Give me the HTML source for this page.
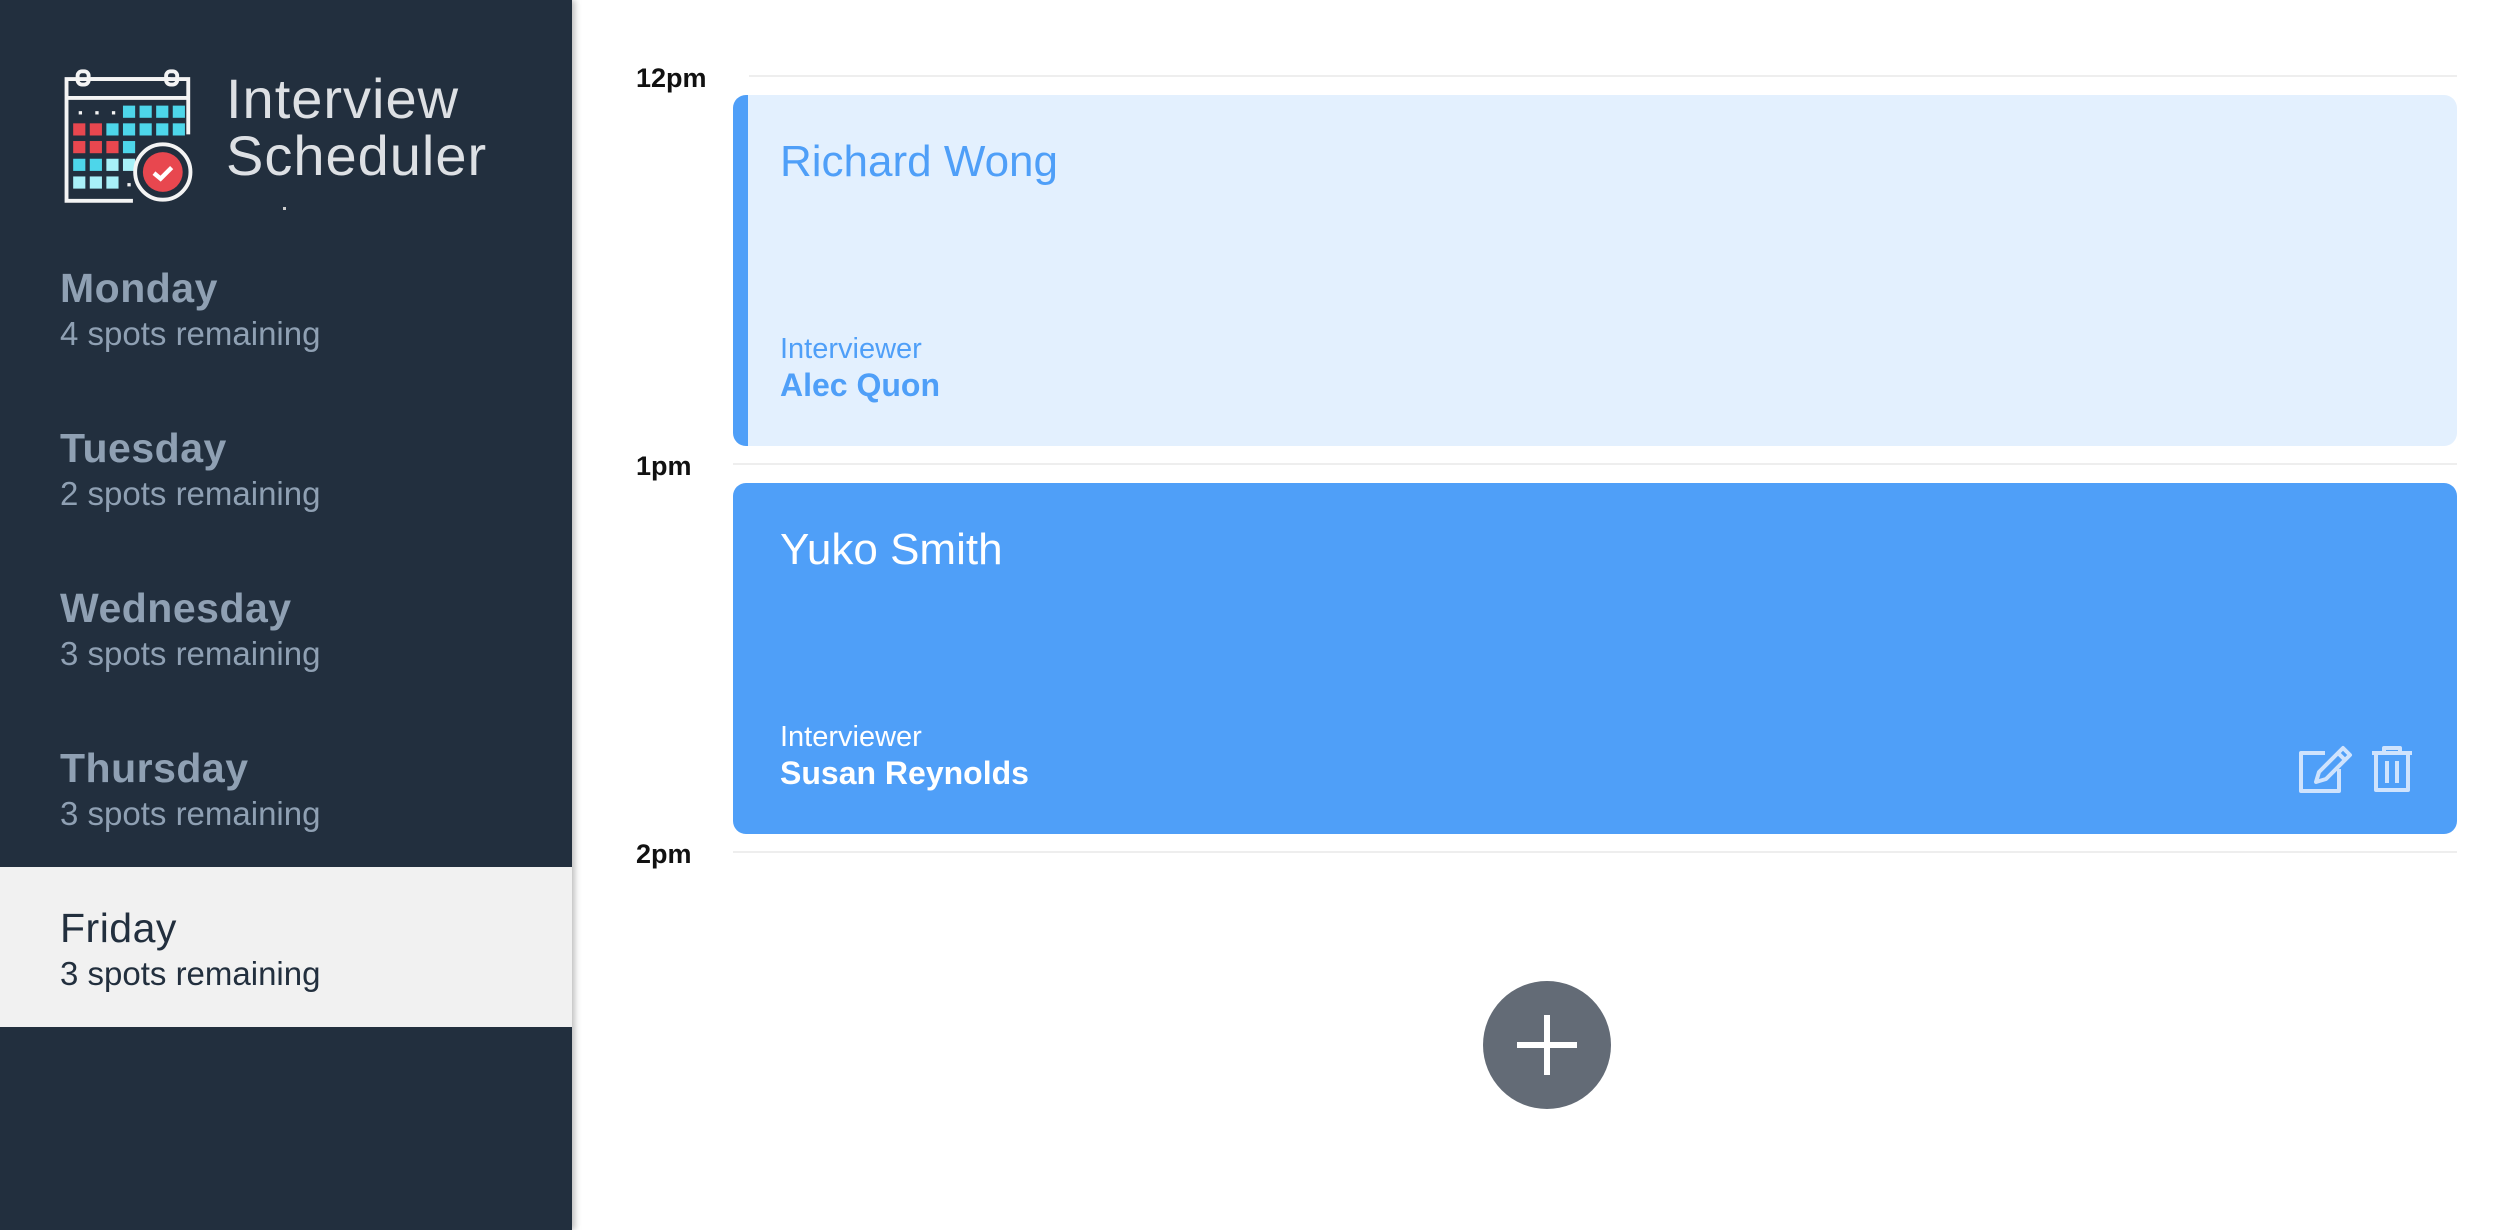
<!DOCTYPE html>
<html><head><meta charset="utf-8"><style>
*{margin:0;padding:0;box-sizing:border-box}
body{width:2513px;height:1230px;overflow:hidden;background:#fff;font-family:"Liberation Sans",sans-serif;position:relative}
.side{position:absolute;left:0;top:0;width:572px;height:1230px;background:#222f3e;box-shadow:3px 0 6px rgba(0,0,0,.25)}
.t{position:absolute;color:#dde0e4;font-size:56px;font-weight:300;left:226px;letter-spacing:1px}
.day{position:absolute;left:0;width:572px;height:160px}
.day .n{position:absolute;left:60px;top:38px;font-size:41px;color:#8fa0b3;font-weight:bold;letter-spacing:.5px}
.day .s{position:absolute;left:60px;top:88px;font-size:33px;color:#8fa0b3}
.day.sel{background:#f1f1f1}
.day.sel .n,.day.sel .s{color:#222f3e}
.day.sel .n{font-weight:normal}
.tm{position:absolute;left:636px;font-size:27px;font-weight:bold;color:#111}
.ln{position:absolute;left:733px;width:1724px;height:2px;background:#eeeeee}
.card{position:absolute;left:733px;width:1724px;border-radius:13px}
.c1{top:95px;height:351px;background:#e3f0fe;border-left:15px solid #4f9ff8;color:#4f9ff8}
.c2{top:483px;height:351px;background:#4f9ff8;color:#fff}
.nm{position:absolute;left:47px;top:42px;font-size:44px}
.c1 .nm,.c1 .iv,.c1 .in{left:32px}
.iv{position:absolute;left:47px;top:238px;font-size:29px}
.in{position:absolute;left:47px;top:272px;font-size:32px;font-weight:bold}
.plus{position:absolute;left:1483px;top:981px;width:128px;height:128px;border-radius:50%;background:#636b76}
</style></head><body>
<div class="side">
<svg style="position:absolute;left:64px;top:68px" width="129" height="135" viewBox="0 0 116 122">
<g fill="none" stroke="#f4f4f4" stroke-width="3.5">
<path d="M62 120H2V10H112V60"/><path d="M24 10H96"/>
<rect x="12" y="3" width="10" height="12" rx="4"/><rect x="92" y="3" width="10" height="12" rx="4"/>
<path d="M2 27H112"/>
</g>
<g fill="#f4f4f4"><rect x="13" y="39" width="3" height="3"/><rect x="28" y="39" width="3" height="3"/><rect x="43" y="39" width="3" height="3"/><rect x="57" y="104" width="3" height="3"/></g>
<g fill="#4dd6ea">
<rect x="53" y="34" width="11" height="11"/><rect x="68" y="34" width="11" height="11"/><rect x="83" y="34" width="11" height="11"/><rect x="98" y="34" width="11" height="11"/>
<rect x="38" y="50" width="11" height="11"/><rect x="53" y="50" width="11" height="11"/><rect x="68" y="50" width="11" height="11"/><rect x="83" y="50" width="11" height="11"/><rect x="98" y="50" width="11" height="11"/>
<rect x="53" y="66" width="11" height="11"/><rect x="8" y="82" width="11" height="11"/><rect x="23" y="82" width="11" height="11"/></g>
<g fill="#a8f0f8"><rect x="38" y="82" width="11" height="11"/><rect x="53" y="82" width="11" height="11"/><rect x="8" y="98" width="11" height="11"/><rect x="23" y="98" width="11" height="11"/><rect x="38" y="98" width="11" height="11"/></g>
<g fill="#e8474f"><rect x="8" y="50" width="11" height="11"/><rect x="23" y="50" width="11" height="11"/><rect x="8" y="66" width="11" height="11"/><rect x="23" y="66" width="11" height="11"/><rect x="38" y="66" width="11" height="11"/></g>
<circle cx="89" cy="94" r="25" fill="#222f3e" stroke="#f4f4f4" stroke-width="3.5"/>
<circle cx="89" cy="94" r="18" fill="#e8474f"/>
<path d="M81 95l6 5 10-10" fill="none" stroke="#fff" stroke-width="4"/>
</svg>
<div class="t" style="top:66px">Interview</div>
<div class="t" style="top:123px">Scheduler</div>
<div style="position:absolute;left:283px;top:207px;width:3px;height:3px;background:#ccc"></div>
<div class="day" style="top:227px"><div class="n">Monday</div><div class="s">4 spots remaining</div></div>
<div class="day" style="top:387px"><div class="n">Tuesday</div><div class="s">2 spots remaining</div></div>
<div class="day" style="top:547px"><div class="n">Wednesday</div><div class="s">3 spots remaining</div></div>
<div class="day" style="top:707px"><div class="n">Thursday</div><div class="s">3 spots remaining</div></div>
<div class="day sel" style="top:867px"><div class="n">Friday</div><div class="s">3 spots remaining</div></div>
</div>
<div class="tm" style="top:63px">12pm</div>
<div class="ln" style="top:75px;left:749px;width:1708px"></div>
<div class="card c1"><div class="nm">Richard Wong</div><div class="iv">Interviewer</div><div class="in">Alec Quon</div></div>
<div class="tm" style="top:451px">1pm</div>
<div class="ln" style="top:463px"></div>
<div class="card c2"><div class="nm">Yuko Smith</div><div class="iv">Interviewer</div><div class="in">Susan Reynolds</div>
<svg style="position:absolute;left:1564px;top:262px" width="56" height="48" viewBox="0 0 56 48" fill="none" stroke="#cfe3fd" stroke-width="4" stroke-linejoin="round">
<path d="M28 8H4v38h38V24"/><path d="M46 3l7 7-24 24-10 3 3-10z"/><path d="M41 8l7 7"/></svg>
<svg style="position:absolute;left:1637px;top:262px" width="44" height="48" viewBox="0 0 44 48" fill="none" stroke="#cfe3fd" stroke-width="4" stroke-linejoin="round">
<path d="M2 8h40"/><path d="M14 8V3h16v5"/><path d="M6 8v37h32V8"/><path d="M17 16v22M27 16v22"/></svg>
</div>
<div class="tm" style="top:839px">2pm</div>
<div class="ln" style="top:851px"></div>
<div class="plus"><svg width="128" height="128" viewBox="0 0 128 128"><path d="M64 34v60M34 64h60" stroke="#fff" stroke-width="6"/></svg></div>
</body></html>
